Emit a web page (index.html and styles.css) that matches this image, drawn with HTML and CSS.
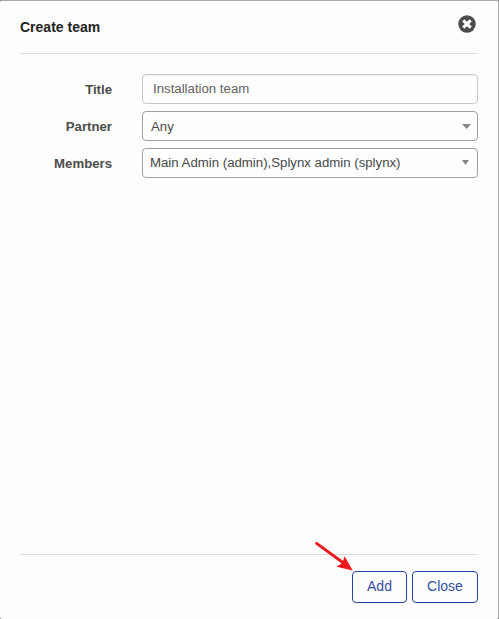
FILE: index.html
```html
<!DOCTYPE html>
<html lang="en">
<head>
<meta charset="utf-8">
<title>Create team</title>
<link rel="stylesheet" href="styles.css">
</head>
<body>
<main class="dialog">
  <header class="header">
    <h1 class="title">Create team</h1>
    <button class="dismiss" type="button" aria-label="Close">
      <svg width="18" height="18" viewBox="0 0 18 18"><circle cx="9" cy="9" r="8.7" fill="#4c4c4c"/><path d="M5.3 5.3l7.4 7.4M12.7 5.3l-7.4 7.4" stroke="#fff" stroke-width="3.1"/></svg>
    </button>
  </header>
  <section class="form">
    <div class="row">
      <span class="label">Title</span>
      <div class="field field-text"><span>Installation team</span></div>
    </div>
    <div class="row">
      <span class="label">Partner</span>
      <div class="field field-select"><span>Any</span><svg class="caret" width="9" height="5" viewBox="0 0 9 5"><path d="M0 0h9L4.5 5z" fill="#858585"/></svg></div>
    </div>
    <div class="row">
      <span class="label">Members</span>
      <div class="field field-multi"><span>Main Admin (admin),Splynx admin (splynx)</span><svg class="caret" width="7" height="5" viewBox="0 0 7 5"><path d="M0 0h7L3.5 5z" fill="#858585"/></svg></div>
    </div>
  </section>
  <footer class="footer">
    <button class="button" type="button">Add</button>
    <button class="button button-close" type="button">Close</button>
    <svg class="arrow" width="40" height="32" viewBox="0 0 40 32"><path d="M2.6 3.4L29.5 23" stroke="#ee171f" stroke-width="2.9" stroke-linecap="round"/><path d="M38.7 30.6L22.5 26.8L28.4 23L30.6 16.3Z" fill="#ee171f"/></svg>
  </footer>
</main>
</body>
</html>
```
FILE: styles.css
```css
* {
  box-sizing: border-box;
}

body {
  margin: 0;
  background: #777;
  font-family: "Liberation Sans", Arial, sans-serif;
}

.dialog {
  display: flex;
  flex-direction: column;
  height: 619px;
  padding: 0 20px 0 20px;
  border-top: 1px solid #aaa;
  border-right: 1px solid #aaa;
  border-radius: 2px;
  background: #fdfdfd;
}

.header {
  display: flex;
  justify-content: space-between;
  height: 53px;
  border-bottom: 1px solid #ddd;
}

.title {
  margin: 18px 0 0;
  font-size: 14px;
  line-height: 16px;
  color: #222;
}

.dismiss {
  width: 18px;
  height: 18px;
  margin: 14px 2px 0 0;
  padding: 0;
  border: 0;
  background: none;
}

.dismiss svg {
  display: block;
}

.form {
  display: flex;
  flex: 1;
  flex-direction: column;
  gap: 7px;
  padding-top: 20px;
}

.row {
  display: grid;
  grid-template-columns: 92px 336px;
  grid-template-rows: 30px;
  column-gap: 30px;
  height: 30px;
}

.label {
  font-size: 13.2px;
  font-weight: bold;
  line-height: 31px;
  text-align: right;
  color: #4c4c4c;
}

.field {
  display: flex;
  align-items: center;
  justify-content: space-between;
  border: 1px solid #a0a0a0;
  border-radius: 4px;
  background: #fefefe;
  font-size: 13.23px;
  line-height: 28px;
  color: #484848;
}

.field-text {
  padding: 0 0 1px 10px;
  border-color: #c8c8c8;
  box-shadow: inset 0 1px 1px rgba(0, 0, 0, 0.07);
  color: #606060;
}

.field-select {
  padding: 1px 6px 0 8px;
}

.field-multi {
  padding: 0 8px 1px 7px;
}

.caret {
  display: block;
}

.footer {
  position: relative;
  display: flex;
  justify-content: flex-end;
  gap: 5px;
  height: 65px;
  padding-top: 16px;
  border-top: 1px solid #ddd;
}

.button {
  width: 55px;
  height: 32px;
  padding: 0 0 2px;
  border: 1px solid #25479b;
  border-radius: 4px;
  background: #fefefe;
  color: #344e9e;
  font: 14px/28px "Liberation Sans", Arial, sans-serif;
}

.button-close {
  width: 66px;
}

.arrow {
  position: absolute;
  right: 124px;
  top: -15px;
}
```
